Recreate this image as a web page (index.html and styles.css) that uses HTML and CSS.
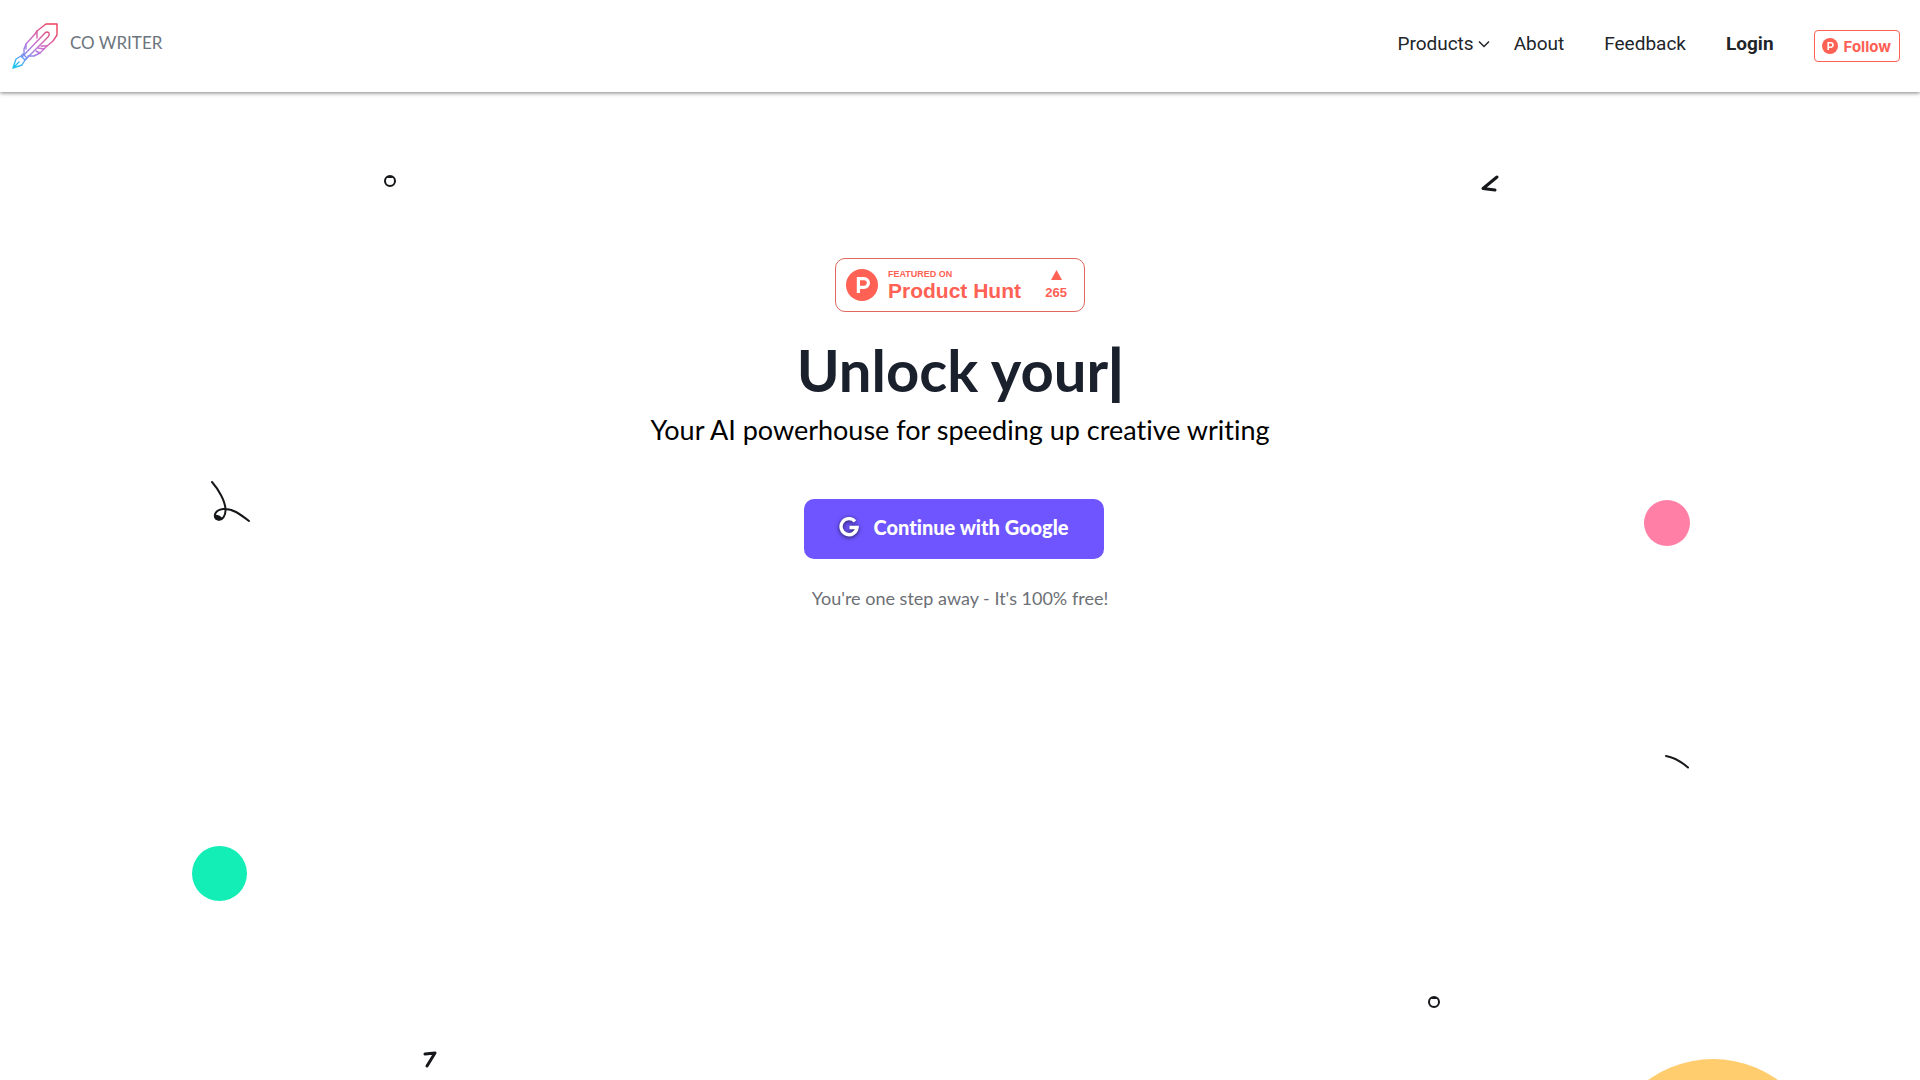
FILE: index.html
```
<!DOCTYPE html>
<html lang="en">
<head>
    <meta charset="UTF-8">
    <meta name="viewport" content="width=device-width, initial-scale=1">
    <title>Co Writer</title>
    <link rel="stylesheet" href="styles.css">
</head>
<body>
    <header class="header">
        <a class="brand" href="#">
            <svg class="brand-logo" viewBox="0 0 46 46" fill="none" stroke="url(#feather)" stroke-width="1.4" stroke-linecap="round" stroke-linejoin="round">
                <defs>
                    <linearGradient id="feather" gradientUnits="userSpaceOnUse" x1="38" y1="1" x2="6" y2="44">
                        <stop offset="0" stop-color="#ee3f5c"/>
                        <stop offset="0.5" stop-color="#c573d8"/>
                        <stop offset="0.75" stop-color="#7f8cf0"/>
                        <stop offset="1" stop-color="#20c4ee"/>
                    </linearGradient>
                </defs>
                <path d="M12 31V26L14 21L23 11L25 8L34 1H45V12L41 18L35 23L28 30L22 33H16"/>
                <path d="M25 8V15M14 21V26M35 23H29M28 30L24 28M32 26L26 25"/>
                <path d="M10 34L33 10Q35 8 37 10Q38 12 36 14L13 37"/>
                <path d="M1 45L4 36L9 33L13 37L10 42ZM1 45L7 39M9 33L11 31L15 35L13 37"/>
            </svg>
            <span>CO WRITER</span>
        </a>
        <nav class="nav">
            <button class="nav-link nav-products" type="button">
                Products
                <svg class="chevron" viewBox="0 0 12 8" fill="none" stroke="#212529" stroke-width="1.5"><path d="M1 1.500L6 6.500L11 1.500"/></svg>
            </button>
            <a class="nav-link" href="#">About</a>
            <a class="nav-link" href="#">Feedback</a>
            <a class="nav-link nav-login" href="#">Login</a>
            <a class="follow" href="#">
                <svg class="follow-icon" viewBox="0 0 40 40">
                    <circle cx="20" cy="20" r="20" fill="#ff6154"/>
                    <path d="M15.500 30V12H22a5.500 5.500 0 0 1 0 11H15.500" fill="none" stroke="#fff" stroke-width="4"/>
                </svg>
                Follow
            </a>
        </nav>
    </header>

    <main class="hero">
        <a class="badge" href="#">
            <svg class="badge-icon" viewBox="0 0 40 40">
                <circle cx="20" cy="20" r="20" fill="#ff6154"/>
                <path d="M15.500 30V12H22.500a5.500 5.500 0 0 1 0 11H15.500" fill="none" stroke="#fff" stroke-width="4"/>
            </svg>
            <span class="badge-text">
                <span class="badge-small">FEATURED ON</span>
                <span class="badge-name">Product Hunt</span>
            </span>
            <span class="badge-votes">
                <svg class="badge-arrow" viewBox="0 0 11 10"><path d="M5.500 0L11 10H0Z" fill="#ff6154"/></svg>
                265
            </span>
        </a>
        <h1 class="title">Unlock your<span class="cursor">|</span></h1>
        <p class="subtitle">Your AI powerhouse for speeding up creative writing</p>
        <button class="google" type="button">
            <svg class="google-icon" viewBox="0 0 20 20" fill="none" stroke="#fff" stroke-width="3.4">
                <path d="M16 4.300A8 8 0 1 0 18 10.500H10.500"/>
            </svg>
            Continue with Google
        </button>
        <p class="note">You're one step away - It's 100% free!</p>

        <!-- floating shapes -->
        <div class="shapes" aria-hidden="true">
            <svg class="shape ring-top" viewBox="0 0 14 14"><circle cx="7" cy="7" r="5"/><path d="M5 3L9 3"/></svg>
            <svg class="shape angle" viewBox="0 0 20 20"><path d="M17 3L3 14.500L15 16"/></svg>
            <svg class="shape squiggle" viewBox="0 0 44 46"><path d="M5 4C12 12 18 23 18.500 31C19 38 15 43 11 41.500C5 39 8 32 16 31C25 30 33 36 42 43"/><path class="blob" d="M8 38C11 37 13 39 14 40C12 42 8 42 8 38Z"/></svg>
            <svg class="shape arc" viewBox="0 0 28 18"><path d="M3 3Q14 5 25 14.500"/></svg>
            <svg class="shape ring-bottom" viewBox="0 0 14 14"><circle cx="7" cy="7" r="5"/><path d="M5 3L9 3"/></svg>
            <svg class="shape seven" viewBox="0 0 16 18"><path d="M3 3L13 2L5 15"/></svg>
            <div class="dot pink"></div>
            <div class="dot green"></div>
            <div class="dot orange"></div>
        </div>
    </main>
</body>
</html>
```

FILE: styles.css
```
* {
    box-sizing: border-box;
}
body {
    margin: 0;
    font-family: Lato, sans-serif;
    font-variant-ligatures: none;
    color: #000;
    background-color: #fff;
}
a {
    color: inherit;
    text-decoration: none;
}
button {
    border: none;
    background: none;
    padding: 0;
    font-family: inherit;
    font-variant-ligatures: inherit;
    cursor: pointer;
}
.header {
    display: flex;
    justify-content: space-between;
    height: 92px;
    padding: 0 20px 0 12px;
    box-shadow: 0 1px 4px rgba(0, 0, 0, 0.5);
}
.brand {
    display: flex;
    align-items: center;
    gap: 12px;
    height: 92px;
    padding-bottom: 8px;
    font-size: 17px;
    color: #6c757d;
}
.brand-logo {
    width: 46px;
    height: 46px;
    margin-top: 8px;
}
.nav {
    display: flex;
    align-items: center;
    gap: 40px;
    height: 92px;
    font-family: Roboto, sans-serif;
}
.nav-link {
    padding-bottom: 4px;
    font-size: 19px;
    line-height: 24px;
    color: #212529;
}
.nav-products {
    display: flex;
    align-items: center;
    gap: 4px;
    margin-right: -16px;
}
.chevron {
    width: 12px;
    height: 8px;
}
.nav-login {
    font-weight: 700;
}
.follow {
    display: flex;
    align-items: center;
    gap: 6px;
    height: 32px;
    padding: 0 8px 0 7px;
    border: 1px solid #ff6154;
    border-radius: 4px;
    font-family: Inter, sans-serif;
    font-size: 15px;
    font-weight: 700;
    color: #ff6154;
}
.follow-icon {
    width: 16px;
    height: 16px;
}
.hero {
    position: relative;
    display: flex;
    flex-direction: column;
    align-items: center;
    min-height: calc(100vh - 92px);
    padding: 166px 16px 0;
    overflow: hidden;
    text-align: center;
}
.badge {
    display: flex;
    align-items: center;
    width: 250px;
    height: 54px;
    padding: 0 17px 0 10px;
    border: 1px solid #e0675f;
    border-radius: 10px;
    font-family: "Liberation Sans", Arial, sans-serif;
    font-weight: 700;
    color: #ff6154;
}
.badge-icon {
    width: 32px;
    height: 32px;
    margin-right: 10px;
}
.badge-text {
    display: flex;
    flex-direction: column;
    text-align: left;
}
.badge-small {
    font-size: 9px;
    line-height: 12px;
}
.badge-name {
    font-size: 21px;
    line-height: 22px;
}
.badge-votes {
    display: flex;
    flex-direction: column;
    align-items: center;
    gap: 5px;
    margin-left: auto;
    font-size: 13px;
    line-height: 16px;
}
.badge-arrow {
    width: 11px;
    height: 10px;
}
.title {
    margin: 22px 0 0;
    font-size: 58px;
    line-height: 72px;
    font-weight: 700;
    color: #1a202c;
}
.cursor {
    -webkit-text-stroke: 2px #1a202c;
}
.subtitle {
    margin: 4px 0 0;
    font-size: 27px;
    line-height: 40px;
}
.google {
    display: flex;
    align-items: center;
    justify-content: center;
    gap: 14px;
    width: 300px;
    height: 60px;
    margin: 49px 12px 0 0;
    padding-bottom: 4px;
    border-radius: 10px;
    background-color: #6f55ff;
    font-size: 20px;
    font-weight: 900;
    color: #fff;
}
.google-icon {
    width: 20px;
    height: 20px;
    filter: drop-shadow(0 1px 2px rgba(0, 0, 0, 0.7));
}
.note {
    margin: 24px 0 0;
    font-size: 18px;
    line-height: 30px;
    color: #6c7075;
}
.shapes {
    position: absolute;
    inset: 0;
    pointer-events: none;
}
.shape {
    position: absolute;
    fill: none;
    stroke: #16171a;
    stroke-width: 2;
    stroke-linecap: round;
    stroke-linejoin: round;
}
.blob {
    fill: #16171a;
}
.ring-top {
    left: 20%;
    top: 82px;
    width: 14px;
    margin-left: -1px;
}
.angle {
    left: 77%;
    top: 82px;
    width: 20px;
    margin-left: 2px;
    stroke-width: 3;
}
.squiggle {
    left: 11%;
    top: 386px;
    width: 44px;
    margin-left: -4px;
}
.arc {
    left: 87%;
    top: 661px;
    width: 28px;
    margin-left: -7px;
}
.ring-bottom {
    left: 74%;
    top: 903px;
    width: 14px;
    margin-left: 6px;
}
.seven {
    left: 22%;
    top: 959px;
    width: 16px;
    stroke-width: 3;
}
.dot {
    position: absolute;
    border-radius: 50%;
}
.pink {
    left: 86%;
    top: 408px;
    width: 46px;
    height: 46px;
    margin-left: -7px;
    background-color: #ff7fa6;
}
.green {
    left: 10%;
    top: 754px;
    width: 55px;
    height: 55px;
    background-color: #12eeb6;
}
.orange {
    left: 83%;
    top: 967px;
    width: 222px;
    height: 222px;
    margin-left: 8px;
    background-color: #ffcc6e;
}
```
